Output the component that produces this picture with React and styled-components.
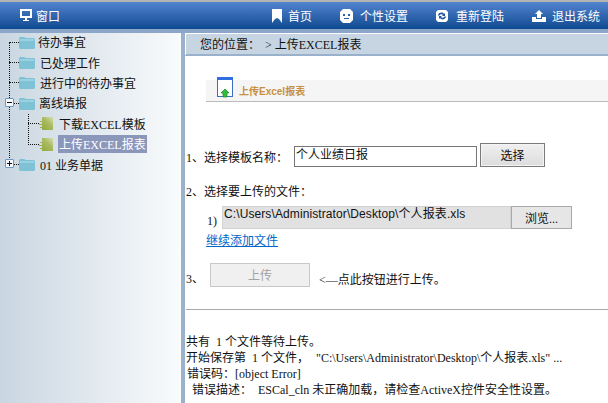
import React from 'react';
import styled, { createGlobalStyle } from 'styled-components';

const serif = '"Liberation Serif", "Noto Sans CJK SC", serif';
const sans = '"Liberation Sans", "Noto Sans CJK SC", sans-serif';

const GlobalStyle = createGlobalStyle`
  html, body { margin: 0; padding: 0; height: 100%; overflow: hidden; background: #fff; }
  body { font-family: ${serif}; font-size: 12px; color: #111; }
`;

const Page = styled.div`
  width: 608px;
  height: 403px;
  display: flex;
  flex-direction: column;
  overflow: hidden;
`;

const TopBar = styled.header`
  height: 27px;
  flex: none;
  border-top: 2px solid #b4b4b4;
  background: linear-gradient(#5384cf, #0f4a90);
  display: flex;
  align-items: center;
  padding: 0 8px 0 20px;
  color: #fff;
  font-size: 12px;
`;

const Brand = styled.div`
  display: flex;
  align-items: center;
  gap: 4px;
`;

const Nav = styled.nav`
  margin-left: auto;
  display: flex;
  align-items: center;
  gap: 28px;
`;

const NavItem = styled.div`
  display: flex;
  align-items: center;
  gap: ${(p) => p.$gap || 6}px;
`;

const TopRule = styled.div`
  height: 4px;
  flex: none;
  background: #8ba6c8;
`;

const Body = styled.div`
  flex: 1;
  display: flex;
  min-height: 0;
`;

const Sidebar = styled.aside`
  width: 181px;
  flex: none;
  border-right: 4px solid #9ab1cb;
  background: linear-gradient(90deg, #c9d6e1, #f9fbfc);
`;

const Tree = styled.ul`
  position: relative;
  list-style: none;
  margin: -1px 0 0;
  padding: 0 0 0 9px;

  &::before {
    content: '';
    position: absolute;
    left: 9px;
    top: 10px;
    height: 122px;
    border-left: 1px dotted #111;
  }
`;

const SubTree = styled.ul`
  position: relative;
  list-style: none;
  margin: 0;
  padding: 0 0 0 19px;

  &::before {
    content: '';
    position: absolute;
    left: 19px;
    top: 0;
    height: 31px;
    border-left: 1px dotted #111;
  }
`;

const Row = styled.li`
  position: relative;
  height: 20.4px;
  display: flex;
  align-items: center;
  white-space: nowrap;
  font-size: 12px;
  color: #111;
`;

const Connector = styled.span`
  width: ${(p) => p.$w || 10}px;
  flex: none;
  border-bottom: 1px dotted #111;
`;

const Toggle = styled.span`
  position: absolute;
  left: -4px;
  top: 5px;
  width: 9px;
  height: 9px;
  box-sizing: border-box;
  border: 1px solid #6f97c6;
  border-radius: 1px;
  background: #f4f7fb;
  color: #111;
  z-index: 1;

  &::before {
    content: '';
    position: absolute;
    left: 1px;
    right: 1px;
    top: 3px;
    height: 1px;
    background: #111;
  }

  &::after {
    content: '';
    display: ${(p) => (p.$open ? 'none' : 'block')};
    position: absolute;
    top: 1px;
    bottom: 1px;
    left: 3px;
    width: 1px;
    background: #111;
  }
`;

const Label = styled.span`
  margin-left: ${(p) => p.$ml ?? 4}px;
  padding: 0 1px;
  ${(p) => p.$selected && 'background: #8b96bb; color: #fff;'}
`;

const Main = styled.main`
  flex: 1;
  min-width: 0;
`;

const Crumb = styled.div`
  height: 20px;
  margin-top: 1px;
  background: #c7d5e2;
  border-left: 1px solid #fff;
  border-bottom: 2px solid #9ab1cb;
  padding-left: 14px;
  display: flex;
  align-items: center;
  gap: 5px;
`;

const TitleBar = styled.div`
  position: relative;
  margin: 24px 0 0 21px;
  height: 21px;
  background: #f5f5f5;
  border-bottom: 1px solid #bbb;
  display: flex;
  align-items: center;
  padding-left: 33px;
  font-size: 10px;
  font-weight: bold;
  color: #c8903e;
  font-family: ${sans};
`;

const TitleIcon = styled.svg`
  position: absolute;
  left: 11px;
  top: -3px;
`;

const Form = styled.div`
  padding-left: 1px;
`;

const FieldRow = styled.div`
  display: flex;
  align-items: center;
  height: ${(p) => p.$h}px;
  margin-top: ${(p) => p.$mt || 0}px;
  padding-left: ${(p) => p.$pl || 0}px;
`;

const Caption = styled.span`
  padding-top: ${(p) => p.$pt || 0}px;
`;

const TextField = styled.div`
  width: 183px;
  height: 21px;
  box-sizing: border-box;
  border: 1px solid #767676;
  margin: 0 3px 0 6px;
  padding-left: 1px;
  line-height: 17px;
  font-size: 12px;
  background: #fff;
`;

const PickButton = styled.div`
  width: 65px;
  height: 24px;
  box-sizing: border-box;
  border: 1px solid #7a7a7a;
  box-shadow: inset 0 0 0 1px #f4f4f4;
  background: linear-gradient(#f0f0f0, #dcdcdc);
  display: flex;
  align-items: center;
  justify-content: center;
  margin-bottom: 3px;
`;

const FileIndex = styled.span`
  width: 15px;
  margin-top: 7px;
  flex: none;
`;

const FileField = styled.div`
  width: 289px;
  height: 23px;
  box-sizing: border-box;
  background: #e1e1e1;
  border: 1px solid #d2d2d2;
  font-family: ${sans};
  letter-spacing: 0.1px;
  padding-left: 1px;
  line-height: 15px;
  white-space: nowrap;
  overflow: hidden;
`;

const BrowseButton = styled.div`
  width: 61px;
  height: 23px;
  box-sizing: border-box;
  border: 1px solid #a9a9a9;
  background: #e6e6e6;
  display: flex;
  align-items: center;
  justify-content: center;
`;

const AddLink = styled.a`
  color: #0066cc;
  text-decoration: underline;
  cursor: pointer;
`;

const UploadButton = styled.div`
  width: 100px;
  height: 24px;
  box-sizing: border-box;
  border: 1px solid #c8c8c8;
  background: #f0f0f0;
  color: #a2a2a2;
  display: flex;
  align-items: center;
  justify-content: center;
  margin: 0 9px 0 6px;
  padding-bottom: 1px;
`;

const Divider = styled.hr`
  margin: 22px 0 0 1px;
  border: 0;
  border-top: 1px solid #aaa;
`;

const Log = styled.div`
  margin: 24px 0 0 1px;
  line-height: 16px;
  white-space: nowrap;
`;

const LogLine = styled.div`
  padding-left: ${(p) => p.$indent || 0}px;
`;

const Gap = styled.span`
  margin-left: ${(p) => p.$w}px;
`;

const MonitorIcon = () => (
  <svg width="12" height="13" viewBox="0 0 12 13" fill="#fff">
    <path fillRule="evenodd" d="M0 0h12v9H7v2h2v1H3v-1h2V9H0zM2 2v5h8V2z" />
  </svg>
);

const BookmarkIcon = () => (
  <svg width="10" height="14" viewBox="0 0 10 14" fill="#fff">
    <path d="M0 0h10v14L7 10 5 9 3 10 0 14z" />
  </svg>
);

const FaceIcon = () => (
  <svg width="13" height="14" viewBox="0 0 13 14">
    <path fill="#fff" d="M3 0h7l3 3v8l-3 3H3l-3-3V3z" />
    <path fill="#2d60a8" d="M3 5h2v2H3zM8 5h2v2H8zM4 9h5v1H4z" />
  </svg>
);

const RefreshIcon = () => (
  <svg width="12" height="12" viewBox="0 0 12 12">
    <path fill="#fff" d="M2 0h8l2 2v8l-2 2H2l-2-2V2z" />
    <path fill="#2458a0" d="M2 5c1-3 5-3 6-1l1-1v3H6l1-1c-1-1-3-1-4 1zM10 7c-1 3-5 3-6 1l-1 1V6h3L5 7c1 1 3 1 4-1z" />
  </svg>
);

const UploadIcon = () => (
  <svg width="14" height="12" viewBox="0 0 14 12" fill="#fff">
    <path d="M7 0l4 4H9v4H5V4H3z" />
    <path d="M0 7h4v2h6V7h4v5H0z" />
  </svg>
);

const FolderIcon = () => (
  <svg width="16" height="13" viewBox="0 0 16 13" style={{ flex: 'none' }}>
    <path fill="#7fc1d5" d="M1 1h4l2 1h8l1 1v9l-1 1H1l-1-1V2z" />
    <path fill="#9ad2e2" d="M1 3h14v2H1z" />
  </svg>
);

const LeafIcon = () => (
  <svg width="14" height="13" viewBox="0 0 14 13" style={{ flex: 'none' }}>
    <defs>
      <linearGradient id="leaf" x1="0" y1="1" x2="1" y2="0">
        <stop offset="0" stopColor="#8fa53a" />
        <stop offset="0.6" stopColor="#a9bb60" />
        <stop offset="1" stopColor="#d6dfb0" />
      </linearGradient>
    </defs>
    <path fill="url(#leaf)" d="M3 0h11v13H3v-2H1v-1h2V8H0V7h3V5H1V4h2z" />
  </svg>
);

const UploadDocIcon = () => (
  <TitleIcon width="16" height="21" viewBox="0 0 16 21">
    <rect x="0.5" y="0.5" width="15" height="19" fill="#fff" stroke="#3c6fc4" />
    <rect x="0" y="0" width="16" height="3" fill="#2f6fe0" />
    <path fill="#2ebd3c" stroke="#178a25" strokeWidth="0.7" d="M8 12l4 4H10v4H6v-4H4z" />
  </TitleIcon>
);

export default function App() {
  return (
    <Page>
      <GlobalStyle />
      <TopBar>
        <Brand>
          <MonitorIcon />
          <span>窗口</span>
        </Brand>
        <Nav>
          <NavItem>
            <BookmarkIcon />
            <span>首页</span>
          </NavItem>
          <NavItem $gap={7}>
            <FaceIcon />
            <span>个性设置</span>
          </NavItem>
          <NavItem $gap={8}>
            <RefreshIcon />
            <span>重新登陆</span>
          </NavItem>
          <NavItem>
            <UploadIcon />
            <span>退出系统</span>
          </NavItem>
        </Nav>
      </TopBar>
      <TopRule />
      <Body>
        <Sidebar>
          <Tree>
            <Row><Connector /><FolderIcon /><Label $ml={2}>待办事宜</Label></Row>
            <Row><Connector /><FolderIcon /><Label>已处理工作</Label></Row>
            <Row><Connector /><FolderIcon /><Label>进行中的待办事宜</Label></Row>
            <Row><Toggle $open /><Connector /><FolderIcon /><Label $ml={3}>离线填报</Label></Row>
            <SubTree>
              <Row><Connector $w={11} /><LeafIcon /><Label $ml={5}>下载EXCEL模板</Label></Row>
              <Row><Connector $w={11} /><LeafIcon /><Label $ml={5} $selected>上传EXCEL报表</Label></Row>
            </SubTree>
            <Row><Toggle /><Connector /><FolderIcon /><Label>01 业务单据</Label></Row>
          </Tree>
        </Sidebar>
        <Main>
          <Crumb>
            <span>您的位置：</span>
            <span>&gt; 上传EXCEL报表</span>
          </Crumb>
          <TitleBar>
            <UploadDocIcon />
            上传Excel报表
          </TitleBar>
          <Form>
            <FieldRow $h={24} $mt={42}>
              <Caption $pt={2}>1、选择模板名称：</Caption>
              <TextField>个人业绩日报</TextField>
              <PickButton>选择</PickButton>
            </FieldRow>
            <FieldRow $h={16} $mt={15}>
              <span>2、选择要上传的文件：</span>
            </FieldRow>
            <FieldRow $h={23} $mt={7} $pl={21}>
              <FileIndex>1)</FileIndex>
              <FileField>C:\Users\Administrator\Desktop\个人报表.xls</FileField>
              <BrowseButton>浏览...</BrowseButton>
            </FieldRow>
            <FieldRow $h={16} $mt={3} $pl={20}>
              <AddLink>继续添加文件</AddLink>
            </FieldRow>
            <FieldRow $h={24} $mt={15}>
              <Caption $pt={6}>3、</Caption>
              <UploadButton>上传</UploadButton>
              <Caption $pt={7}>&lt;—点此按钮进行上传。</Caption>
            </FieldRow>
          </Form>
          <Divider />
          <Log>
            <LogLine>共有&nbsp;&nbsp;1 个文件等待上传。</LogLine>
            <LogLine>开始保存第&nbsp;&nbsp;1 个文件，<Gap $w={7} />"C:\Users\Administrator\Desktop\个人报表.xls" ...</LogLine>
            <LogLine $indent={1}>错误码：[object Error]</LogLine>
            <LogLine $indent={6}>错误描述：<Gap $w={6} />ESCal_cln 未正确加载，请检查ActiveX控件安全性设置。</LogLine>
          </Log>
        </Main>
      </Body>
    </Page>
  );
}
